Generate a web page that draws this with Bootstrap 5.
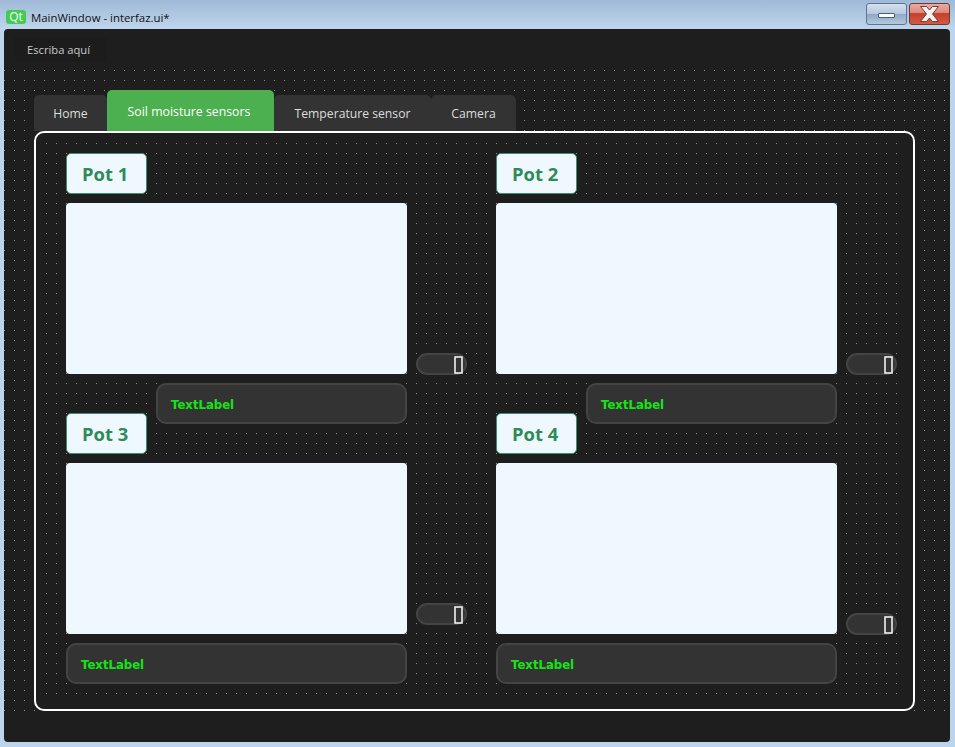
<!DOCTYPE html>
<html lang="es">
<head>
  <meta charset="UTF-8">
  <meta name="viewport" content="width=device-width, initial-scale=1.0">
  <title>MainWindow - interfaz.ui*</title>
  <link href="https://cdn.jsdelivr.net/npm/bootstrap@5.3.2/dist/css/bootstrap.min.css" rel="stylesheet">
  <style>
    body {
      background-color: #bcd4ec;
      height: 747px;
      overflow: hidden;
      font-family: "Open Sans", "Noto Sans", sans-serif;
    }
    .title-bar {
      height: 29px;
      padding-left: 6px;
      background: linear-gradient(#9fb9d7, #bed5ec);
      color: #111;
      font-size: 11.4px;
    }
    .qt-logo {
      width: 20px;
      height: 14px;
      margin-top: 10px;
      margin-right: 5px;
      border-radius: 3px;
      background-color: #41cd52;
      color: #fff;
      font-size: 12px;
      line-height: 14px;
      text-align: center;
    }
    .title-text {
      margin-top: 9px;
      line-height: 17px;
    }
    .win-btn {
      width: 41px;
      height: 22px;
      margin-top: 3px;
      border: 1px solid #5e7590;
      border-radius: 3px;
    }
    .win-min {
      margin-right: 2px;
      background: linear-gradient(#d5e1ee 0, #b6c9de 48%, #8ea8c6 52%, #b4c8de 100%);
    }
    .win-close {
      margin-right: 5px;
      border-color: #6e3a38;
      background: linear-gradient(#eca99e 0, #de8d80 42%, #c5402b 48%, #cf5a45 100%);
    }
    .min-bar {
      width: 17px;
      height: 5px;
      margin-top: 9px;
      border: 1px solid #4a5f78;
      border-radius: 1px;
      background-color: #fff;
    }
    .app-window {
      height: 713px;
      margin: 0 5px 0 4px;
      border-radius: 4px;
      background-color: #1e1e1e;
      overflow: hidden;
    }
    .menu-strip {
      height: 40px;
      padding: 8px 0 0 10px;
    }
    .menu-entry {
      width: 93px;
      height: 25px;
      padding-left: 13px;
      background-color: #1c1c1c;
      color: #c8c8c8;
      font-size: 11.2px;
      line-height: 25px;
    }
    .dot-field {
      height: 642px;
      padding: 21px 35px 0 30px;
      background-image: radial-gradient(circle at .5px .5px, #8c8c8c .7px, transparent .8px);
      background-size: 10px 10px;
      background-position: 0 1px;
    }
    .tab-strip {
      height: 41px;
      flex-wrap: nowrap;
    }
    .tab-item {
      height: 36px;
      margin-top: 5px;
      padding-top: 10px;
      border-radius: 5px 5px 0 0;
      background-color: #333;
      color: #ddd;
      font-size: 12.2px;
      text-align: center;
    }
    .tab-item.selected {
      height: 41px;
      margin-top: 0;
      padding: 13px 3px 0 0;
      background-color: #4caf50;
      color: #fff;
      font-size: 12.3px;
    }
    .tab-home { width: 73px; }
    .tab-soil { width: 167px; }
    .tab-temp { width: 157px; }
    .tab-cam { width: 85px; }
    .pot-panel {
      width: 881px;
      height: 580px;
      padding: 10px 16px 13px 10px;
      border: 2px solid #fff;
      border-radius: 10px;
      background: radial-gradient(circle at .5px .5px, #8c8c8c .7px, transparent .8px) 0 0 / 10px 10px content-box, #1e1e1e;
    }
    .pot-grid {
      display: grid;
      grid-template-columns: 401px 401px;
      column-gap: 29px;
      padding: 10px 0 0 20px;
    }
    .pot-low { margin-top: -11px; }
    .pot-name {
      width: 81px;
      height: 41px;
      margin-bottom: 9px;
      padding-left: 15px;
      border: 1px solid #3c8f68;
      border-radius: 5px;
      background-color: #f0f8ff;
      color: #2e8b57;
      font-size: 18.4px;
      font-weight: 700;
      line-height: 39px;
    }
    .plot-row { gap: 9px; }
    .plot-box {
      width: 341px;
      height: 171px;
      border-radius: 4px;
      background-color: #f0f8ff;
    }
    .lcd-pill {
      width: 51px;
      height: 22px;
      padding: 1px 2px 0 0;
      border: 2px solid #444;
      border-radius: 11px;
      background-color: #333;
    }
    .lift-none { margin-bottom: -1px; }
    .lift-mid { margin-bottom: 9px; }
    .value-box {
      width: 341px;
      height: 41px;
      margin-top: 9px;
      padding: 2px 0 0 13px;
      border: 2px solid #444;
      border-radius: 10px;
      background-color: #333;
      color: #14e614;
      font-family: "DejaVu Sans", sans-serif;
      font-size: 11.7px;
      font-weight: 700;
      line-height: 37px;
    }
    .value-box.short { width: 251px; margin-left: 90px; }
  </style>
</head>
<body>

  <div class="title-bar d-flex align-items-start">
    <div class="qt-logo flex-shrink-0">Qt</div>
    <div class="title-text">MainWindow - interfaz.ui*</div>
    <div class="win-btn win-min ms-auto d-flex justify-content-center"><div class="min-bar"></div></div>
    <div class="win-btn win-close d-flex justify-content-center align-items-center">
      <svg width="19" height="16" viewBox="0 0 19 16"><path d="M.5 .5 H6.5 L9.5 4 L12.5 .5 H18.5 L12.5 8 L18.5 15.5 H12.5 L9.5 12 L6.5 15.5 H.5 L6.5 8 Z" fill="#f2f2f2" stroke="#7a3a36" stroke-width="1"/></svg>
    </div>
  </div>

  <div class="app-window">
    <div class="menu-strip">
      <div class="menu-entry">Escriba aquí</div>
    </div>
    <div class="dot-field">
      <ul class="nav tab-strip">
        <li class="tab-item tab-home">Home</li>
        <li class="tab-item tab-soil selected">Soil moisture sensors</li>
        <li class="tab-item tab-temp">Temperature sensor</li>
        <li class="tab-item tab-cam">Camera</li>
      </ul>
      <div class="pot-panel">
        <div class="pot-grid">
          <section>
            <div class="pot-name">Pot 1</div>
            <div class="plot-row d-flex align-items-end">
              <div class="plot-box"></div>
              <div class="lcd-pill lift-none d-flex justify-content-end"><svg width="9" height="18" viewBox="0 0 9 18"><rect x="1" y="1" width="7" height="16" stroke="#f0f0f0" stroke-width="1.6" fill="none"/></svg></div>
            </div>
            <div class="value-box short">TextLabel</div>
          </section>
          <section>
            <div class="pot-name">Pot 2</div>
            <div class="plot-row d-flex align-items-end">
              <div class="plot-box"></div>
              <div class="lcd-pill lift-none d-flex justify-content-end"><svg width="9" height="18" viewBox="0 0 9 18"><rect x="1" y="1" width="7" height="16" stroke="#f0f0f0" stroke-width="1.6" fill="none"/></svg></div>
            </div>
            <div class="value-box short">TextLabel</div>
          </section>
          <section class="pot-low">
            <div class="pot-name">Pot 3</div>
            <div class="plot-row d-flex align-items-end">
              <div class="plot-box"></div>
              <div class="lcd-pill lift-mid d-flex justify-content-end"><svg width="9" height="18" viewBox="0 0 9 18"><rect x="1" y="1" width="7" height="16" stroke="#f0f0f0" stroke-width="1.6" fill="none"/></svg></div>
            </div>
            <div class="value-box">TextLabel</div>
          </section>
          <section class="pot-low">
            <div class="pot-name">Pot 4</div>
            <div class="plot-row d-flex align-items-end">
              <div class="plot-box"></div>
              <div class="lcd-pill lift-none d-flex justify-content-end"><svg width="9" height="18" viewBox="0 0 9 18"><rect x="1" y="1" width="7" height="16" stroke="#f0f0f0" stroke-width="1.6" fill="none"/></svg></div>
            </div>
            <div class="value-box">TextLabel</div>
          </section>
        </div>
      </div>
    </div>
  </div>

</body>
</html>
